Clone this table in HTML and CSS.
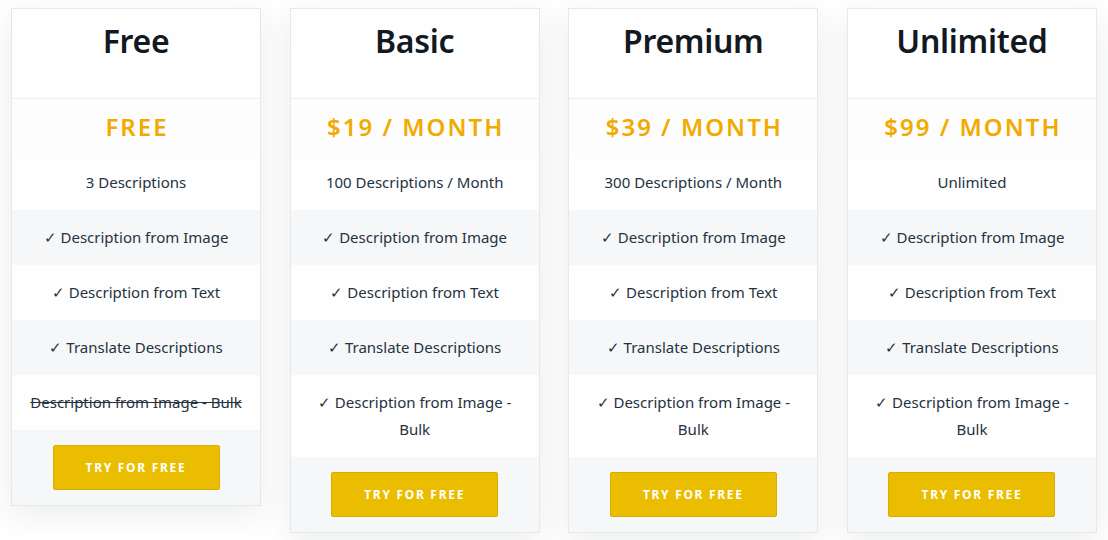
FILE: index.html
```html
<!DOCTYPE html>
<html>
<head>
<meta charset="utf-8">
<link rel="stylesheet" href="styles.css">
</head>
<body>
<div class="plans">
  <div class="card">
    <div class="head"><h2>Free</h2></div>
    <div class="price">FREE</div>
    <div class="row">3 Descriptions</div>
    <div class="row alt">✓ Description from Image</div>
    <div class="row">✓ Description from Text</div>
    <div class="row alt">✓ Translate Descriptions</div>
    <div class="row"><s>Description from Image - Bulk</s></div>
    <div class="foot"><a class="btn">TRY FOR FREE</a></div>
  </div>
  <div class="card">
    <div class="head"><h2>Basic</h2></div>
    <div class="price">$19 / MONTH</div>
    <div class="row">100 Descriptions / Month</div>
    <div class="row alt">✓ Description from Image</div>
    <div class="row">✓ Description from Text</div>
    <div class="row alt">✓ Translate Descriptions</div>
    <div class="row">✓ Description from Image -<br>Bulk</div>
    <div class="foot"><a class="btn">TRY FOR FREE</a></div>
  </div>
  <div class="card">
    <div class="head"><h2>Premium</h2></div>
    <div class="price">$39 / MONTH</div>
    <div class="row">300 Descriptions / Month</div>
    <div class="row alt">✓ Description from Image</div>
    <div class="row">✓ Description from Text</div>
    <div class="row alt">✓ Translate Descriptions</div>
    <div class="row">✓ Description from Image -<br>Bulk</div>
    <div class="foot"><a class="btn">TRY FOR FREE</a></div>
  </div>
  <div class="card">
    <div class="head"><h2>Unlimited</h2></div>
    <div class="price">$99 / MONTH</div>
    <div class="row">Unlimited</div>
    <div class="row alt">✓ Description from Image</div>
    <div class="row">✓ Description from Text</div>
    <div class="row alt">✓ Translate Descriptions</div>
    <div class="row">✓ Description from Image -<br>Bulk</div>
    <div class="foot"><a class="btn">TRY FOR FREE</a></div>
  </div>
</div>
</body>
</html>
```
FILE: styles.css
```css
* { box-sizing: border-box; }
html, body { margin: 0; padding: 0; background: #ffffff; }
body {
  font-family: "Noto Sans", "Open Sans", sans-serif;
  color: #25323f;
  width: 1108px;
  height: 540px;
  overflow: hidden;
}
.plans {
  display: flex;
  align-items: flex-start;
  justify-content: space-between;
  width: 1086px;
  margin: 8px 0 0 11px;
}
.card {
  width: 250px;
  background: #fdfdfd;
  border: 1px solid #e7e8ea;
  box-shadow: 0 8px 30px rgba(30, 40, 60, 0.09);
  text-align: center;
}
.head {
  height: 90px;
  border-bottom: 1px solid #eceef0;
  background: #fefefe;
}
.head h2 {
  margin: 0;
  padding-top: 14px;
  font-size: 32px;
  line-height: 36px;
  font-weight: 600;
  color: #121921;
  letter-spacing: -0.3px;
}
.price {
  height: 56px;
  line-height: 56px;
  font-size: 24px;
  font-weight: 600;
  letter-spacing: 2px;
  color: #f2aa00;
  padding-left: 2px;
}
.row {
  padding: 14px 12px;
  font-size: 15px;
  line-height: 27px;
  background: #fefefe;
}
.row.alt { background: #f6f7f8; }
.row s { text-decoration-thickness: 1px; }
.foot {
  background: #f6f7f8;
  padding: 15px 0;
  display: flex;
  justify-content: center;
}
.btn {
  display: block;
  width: 167px;
  height: 45px;
  line-height: 43px;
  background: #ebbd00;
  border: 1px solid #d9ad00;
  border-radius: 2px;
  color: #ffffff;
  font-size: 12px;
  font-weight: 700;
  letter-spacing: 1.7px;
}
```
